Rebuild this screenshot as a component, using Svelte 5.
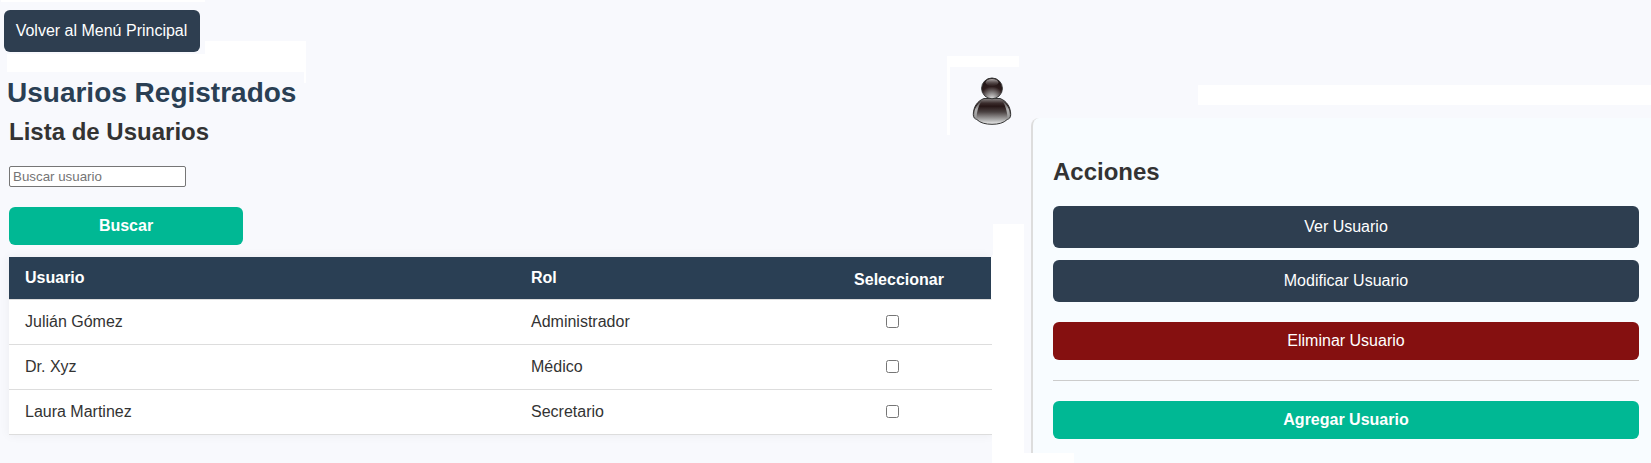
<script>
  const users = [
    { name: 'Julián Gómez', role: 'Administrador' },
    { name: 'Dr. Xyz', role: 'Médico' },
    { name: 'Laura Martinez', role: 'Secretario' }
  ];
</script>

<div class="page">
  <main>
    <button class="btn back">Volver al Menú Principal</button>
    <h1>Usuarios Registrados</h1>
    <h2>Lista de Usuarios</h2>
    <input class="search" type="text" placeholder="Buscar usuario" />
    <button class="btn green find">Buscar</button>
    <div class="table">
      <div class="row head"><span>Usuario</span><span>Rol</span><span class="select">Seleccionar</span></div>
      {#each users as user}
        <div class="row">
          <span>{user.name}</span><span>{user.role}</span>
          <span class="select"><input type="checkbox" aria-label={user.name} /></span>
        </div>
      {/each}
    </div>
  </main>

  <aside>
    <h2>Acciones</h2>
    <button class="btn">Ver Usuario</button>
    <button class="btn">Modificar Usuario</button>
    <button class="btn red">Eliminar Usuario</button>
    <hr />
    <button class="btn green">Agregar Usuario</button>
  </aside>

  <i class="patch top"></i>
  <i class="patch title-a"></i>
  <i class="patch title-b"></i>
  <i class="patch title-c"></i>
  <i class="patch icon-a"></i>
  <i class="patch icon-b"></i>
  <i class="patch bar"></i>
  <i class="patch side-a"></i>
  <i class="patch side-b"></i>
  <i class="patch foot"></i>

  <svg class="avatar" width="40" height="49" viewBox="0 0 40 49">
    <defs>
      <linearGradient id="body" x1="0" y1="0" x2="0" y2="1">
        <stop offset="0" stop-color="#8a8686" />
        <stop offset=".18" stop-color="#3a2c2c" />
        <stop offset=".3" stop-color="#261616" />
        <stop offset=".52" stop-color="#4a4242" />
        <stop offset=".85" stop-color="#b5b5b5" />
        <stop offset="1" stop-color="#f0f0f0" />
      </linearGradient>
      <radialGradient id="head" cx=".5" cy="1" r=".95">
        <stop offset="0" stop-color="#e0e0e0" />
        <stop offset=".3" stop-color="#8a8686" />
        <stop offset=".62" stop-color="#2c1c1c" />
        <stop offset="1" stop-color="#201414" />
      </radialGradient>
      <linearGradient id="shine" x1="0" y1="0" x2="0" y2="1">
        <stop offset="0" stop-color="#b5b0b0" />
        <stop offset="1" stop-color="#4a3d3d" stop-opacity=".2" />
      </linearGradient>
      <linearGradient id="arm" x1="0" y1="0" x2="0" y2="1">
        <stop offset="0" stop-color="#4a4646" />
        <stop offset=".5" stop-color="#b0b0b0" />
        <stop offset="1" stop-color="#999" />
      </linearGradient>
    </defs>
    <path d="M12 21.5C5 24 1.300 30.500 1.300 37.500c0 3.200 1.300 4.200 3.500 5C8.300 46 13.500 47.300 20 47.300s11.700-1.300 15.200-4.800c2.200-.8 3.500-1.800 3.500-5C38.700 30.500 35 24 28 21.500z" fill="url(#body)" stroke="#333" />
    <path d="M9.500 24C5 27 2.200 32 2.200 37.500c0 2 .8 3 2.300 3.700.2-6 1.700-12.200 5-17.200zM30.500 24c4.500 3 7.300 8 7.300 13.500 0 2-.8 3-2.300 3.700-.2-6-1.700-12.200-5-17.200z" fill="url(#arm)" />
    <circle cx="20" cy="11.400" r="10.400" fill="url(#head)" stroke="#333" />
    <ellipse cx="20" cy="5.500" rx="6.500" ry="3.500" fill="url(#shine)" />
  </svg>
</div>

<style>
  :global(body) { margin: 0; }
  .page {
    position: relative;
    display: flex;
    gap: 39px;
    width: 1651px;
    height: 463px;
    overflow: hidden;
    box-sizing: border-box;
    background: #f8f9fd;
    color: #333;
    font: 16px/18px "Liberation Sans", Arial, sans-serif;
  }
  main {
    position: relative;
    z-index: 1;
    display: flex;
    flex-direction: column;
    align-items: flex-start;
    width: 992px;
    box-sizing: border-box;
    padding: 10px 0 0 9px;
    flex: none;
  }
  h1, h2 { margin: 0; font-weight: bold; }
  h1 { margin: 25px 0 0 -2px; font-size: 28px; line-height: 32px; color: #2a3f54; }
  h2 { font-size: 24px; line-height: 28px; }
  main h2 { margin-top: 9px; }
  .btn {
    display: block;
    width: 100%;
    height: 42px;
    padding: 0;
    border: 0;
    border-radius: 6px;
    background: #2e3e50;
    color: #fff;
    font: inherit;
  }
  .btn.back { width: 196px; margin-left: -5px; padding-right: 1px; }
  .btn.green, .btn.red { height: 38px; padding-bottom: 1px; }
  .btn.green { background: #00b894; font-weight: bold; }
  .btn.red { background: #851010; }
  .search {
    width: 177px;
    height: 21px;
    margin: 20px 0 0;
    box-sizing: border-box;
    padding: 1px 3px;
    border: 1px solid #767676;
    border-radius: 2px;
    background: #fff;
    font: 13.333px "Liberation Sans", Arial, sans-serif;
  }
  .search::placeholder { color: #757575; }
  .btn.find { width: 234px; margin: 20px 0 12px; }
  .table { width: 983px; background: #fff; box-shadow: 0 0 10px rgba(0, 0, 0, .06); }
  .row {
    display: grid;
    grid-template-columns: 506px 277px 200px;
    align-items: center;
    height: 45px;
    box-sizing: border-box;
    border-bottom: 1px solid #ddd;
  }
  .row > span { padding-left: 16px; }
  .row > .select { display: flex; justify-content: center; padding: 0 0 1px; }
  .head {
    height: 43px;
    border-right: 1px solid #fff;
    background: #2a3f54;
    background-clip: padding-box;
    color: #fff;
    font-weight: bold;
  }
  .head > span { padding-bottom: 1px; }
  .head > .select { padding: 3px 0 0 14px; }
  input[type="checkbox"] { margin: 0; width: 13px; height: 13px; }
  aside {
    flex: 1;
    margin: 118px 0 0;
    padding: 40px 12px 0 20px;
    box-sizing: border-box;
    border-left: 2px solid #ddd;
    border-radius: 8px 0 0 0;
    background: #f8fcff;
  }
  aside h2 { margin-bottom: 20px; }
  aside .btn + .btn { margin-top: 12px; }
  aside .btn + .red { margin-top: 20px; }
  hr { margin: 20px 0; height: 1px; border: 0; background: #ccc; }
  .patch { position: absolute; background: #fff; }
  .top { left: 1px; top: 0; width: 204px; height: 2px; }
  .title-a { left: 7px; top: 54px; width: 299px; height: 18px; }
  .title-b { left: 205px; top: 41px; width: 101px; height: 13px; }
  .title-c { left: 304px; top: 72px; width: 2px; height: 11px; }
  .icon-a { left: 947px; top: 56px; width: 72px; height: 11px; }
  .icon-b { left: 947px; top: 67px; width: 3px; height: 68px; }
  .bar { left: 1198px; top: 85px; width: 453px; height: 20px; }
  .side-a { z-index: 2; left: 993px; top: 224px; width: 31px; height: 31px; }
  .side-b { z-index: 2; left: 992px; top: 255px; width: 32px; height: 208px; }
  .foot { z-index: 2; left: 992px; top: 453px; width: 82px; height: 10px; }
  .avatar { position: absolute; z-index: 2; left: 972px; top: 77px; }
</style>
